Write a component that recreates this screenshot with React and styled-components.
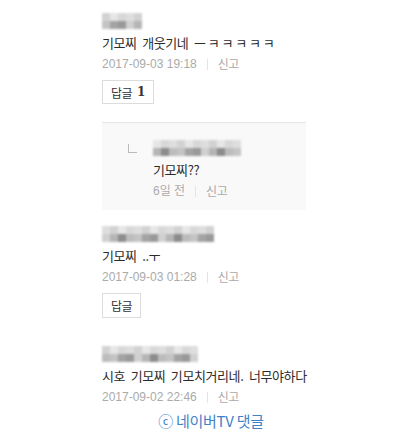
import React from "react";
import styled, { createGlobalStyle } from "styled-components";

const Global = createGlobalStyle`
  body {
    margin: 0;
    background: #fff;
    font-family: "Liberation Sans", "Noto Sans CJK KR", sans-serif;
  }
`;

const Page = styled.div`
  width: 408px;
  padding: 13px 0 0 102px;
  box-sizing: border-box;
`;

const Comment = styled.div`
  display: flex;
  flex-direction: column;
  align-items: flex-start;
  margin-top: ${(p) => p.$top || 0}px;
`;

const Mosaic = styled.div`
  display: grid;
  grid-template-columns: repeat(${(p) => p.$cols}, 8px);
  grid-auto-rows: 8px;
  filter: blur(0.8px);
`;

const Cell = styled.div`
  background: ${(p) => p.$shade};
`;

const Text = styled.div`
  margin-top: 4px;
  font-family: "Noto Sans CJK KR", sans-serif;
  font-size: 13px;
  letter-spacing: -0.4px;
  word-spacing: 3px;
  line-height: 20px;
  color: #2b2b2b;
`;

const Jamo = styled.span`
  letter-spacing: 1.8px;
`;

const Meta = styled.div`
  margin-top: 1px;
  display: flex;
  align-items: center;
  font-size: 12px;
  line-height: 20px;
  color: #aaa;
`;

const Sep = styled.span`
  width: 1px;
  height: 11px;
  background: #e4e4e4;
  margin: 0 10px;
`;

const Report = styled.span`
  font-family: "Noto Sans CJK KR", sans-serif;
  letter-spacing: -0.5px;
`;

const ReplyButton = styled.button`
  margin-top: 6px;
  height: ${(p) => p.$h || 24}px;
  padding: 0 8px;
  border: 1px solid #dcdcdc;
  background: #fff;
  font-family: "Noto Sans CJK KR", sans-serif;
  font-size: 12px;
  color: #333;
  display: flex;
  align-items: center;
  gap: 5px;
  letter-spacing: -0.5px;
`;

const Count = styled.b`
  font-family: "DejaVu Serif", serif;
  font-size: 12px;
  letter-spacing: 0;
`;

const ReplyBox = styled.div`
  margin-top: 18px;
  width: 204px;
  box-sizing: border-box;
  background: #f9f9f9;
  border-top: 1px solid #e6e6e6;
  padding: 17px 0 9px 26px;
  display: flex;
  gap: 16px;
`;

const Corner = styled.div`
  margin-top: 4px;
  width: 8px;
  height: 8px;
  border-left: 1px solid #bbb;
  border-bottom: 1px solid #bbb;
  flex-shrink: 0;
`;

const Footer = styled.div`
  margin: 4px 0 0 -88px;
  text-align: center;
  font-family: "Noto Sans CJK KR", sans-serif;
  font-size: 15px;
  letter-spacing: -0.3px;
  color: #3f82c7;
  line-height: 20px;
`;

const shades = ["#b5b5b5", "#999", "#c4c4c4", "#8c8c8c", "#d0d0d0", "#a3a3a3", "#bcbcbc"];
const light = ["#dedede", "#d2d2d2", "#e6e6e6", "#d8d8d8"];

const Nick = ({ cols, seed }) => {
  const cells = [];
  for (let i = 0; i < cols * 2; i++) {
    const top = i < cols;
    const s = top ? light[(i + seed) % light.length] : shades[(i * 3 + seed) % shades.length];
    cells.push(<Cell key={i} $shade={s} />);
  }
  return <Mosaic $cols={cols}>{cells}</Mosaic>;
};

const MetaLine = ({ date }) => (
  <Meta>
    {date}
    <Sep />
    <Report>신고</Report>
  </Meta>
);

export default function App() {
  return (
    <>
      <Global />
      <Page>
        <Comment>
          <Nick cols={5} seed={1} />
          <Text>
            기모찌 개웃기네 <Jamo>ㅡㅋㅋㅋㅋㅋ</Jamo>
          </Text>
          <MetaLine date="2017-09-03 19:18" />
          <ReplyButton>
            답글 <Count>1</Count>
          </ReplyButton>
        </Comment>

        <ReplyBox>
          <Corner />
          <Comment>
            <Nick cols={11} seed={2} />
            <Text>기모찌??</Text>
            <MetaLine date="6일 전" />
          </Comment>
        </ReplyBox>

        <Comment $top={16}>
          <Nick cols={14} seed={4} />
          <Text>기모찌 ..ㅜ</Text>
          <MetaLine date="2017-09-03 01:28" />
          <ReplyButton $h={25}>답글</ReplyButton>
        </Comment>

        <Comment $top={28}>
          <Nick cols={12} seed={5} />
          <Text>시호 기모찌 기모치거리네. 너무야하다</Text>
          <MetaLine date="2017-09-02 22:46" />
        </Comment>

        <Footer>ⓒ 네이버TV 댓글</Footer>
      </Page>
    </>
  );
}
